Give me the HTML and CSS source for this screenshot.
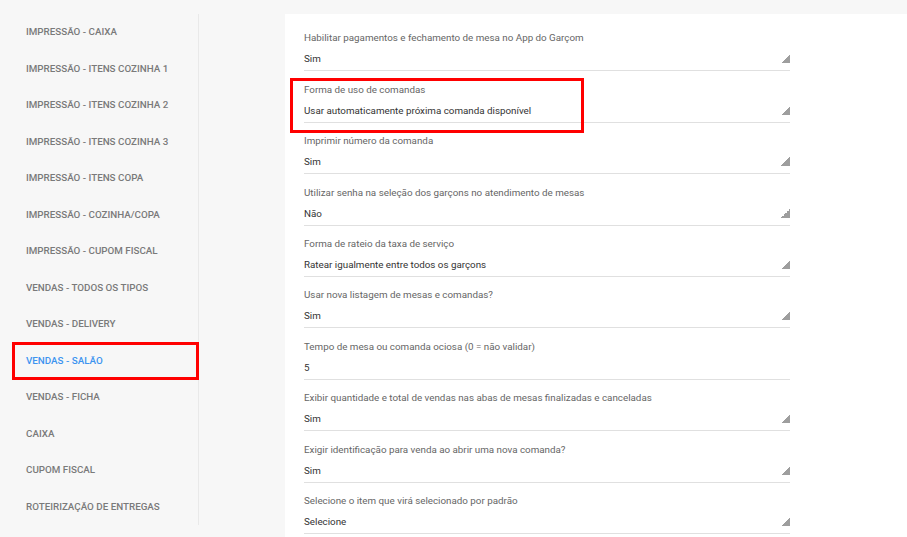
FILE: index.html
```html
<!DOCTYPE html>
<html lang="pt-BR">
  <head>
    <meta charset="UTF-8" />
    <meta name="viewport" content="width=device-width, initial-scale=1.0" />
    <title>Configurações</title>
    <link rel="stylesheet" href="styles.css">
  </head>
  <body>
    <div class="page">
      <ul class="sideMenu">
        <li class="sideItem">Impressão - Caixa</li>
        <li class="sideItem">Impressão - Itens Cozinha 1</li>
        <li class="sideItem">Impressão - Itens Cozinha 2</li>
        <li class="sideItem">Impressão - Itens Cozinha 3</li>
        <li class="sideItem">Impressão - Itens Copa</li>
        <li class="sideItem">Impressão - Cozinha/Copa</li>
        <li class="sideItem">Impressão - Cupom Fiscal</li>
        <li class="sideItem">Vendas - Todos os tipos</li>
        <li class="sideItem">Vendas - Delivery</li>
        <li class="sideItem active marked">Vendas - Salão</li>
        <li class="sideItem">Vendas - Ficha</li>
        <li class="sideItem">Caixa</li>
        <li class="sideItem">Cupom Fiscal</li>
        <li class="sideItem">Roteirização de entregas</li>
      </ul>

      <div class="content">
        <div class="fields">
          <div class="field">
            <div class="fieldLabel">Habilitar pagamentos e fechamento de mesa no App do Garçom</div>
            <div class="fieldValue"><span>Sim</span><i class="arrow"></i></div>
          </div>
          <div class="field marked">
            <div class="fieldLabel">Forma de uso de comandas</div>
            <div class="fieldValue"><span>Usar automaticamente próxima comanda disponível</span><i class="arrow"></i></div>
          </div>
          <div class="field">
            <div class="fieldLabel">Imprimir número da comanda</div>
            <div class="fieldValue"><span>Sim</span><i class="arrow"></i></div>
          </div>
          <div class="field">
            <div class="fieldLabel">Utilizar senha na seleção dos garçons no atendimento de mesas</div>
            <div class="fieldValue"><span>Não</span><i class="arrow"></i></div>
          </div>
          <div class="field">
            <div class="fieldLabel">Forma de rateio da taxa de serviço</div>
            <div class="fieldValue"><span>Ratear igualmente entre todos os garçons</span><i class="arrow"></i></div>
          </div>
          <div class="field">
            <div class="fieldLabel">Usar nova listagem de mesas e comandas?</div>
            <div class="fieldValue"><span>Sim</span><i class="arrow"></i></div>
          </div>
          <div class="field">
            <div class="fieldLabel">Tempo de mesa ou comanda ociosa (0 = não validar)</div>
            <div class="fieldValue"><span>5</span></div>
          </div>
          <div class="field">
            <div class="fieldLabel">Exibir quantidade e total de vendas nas abas de mesas finalizadas e canceladas</div>
            <div class="fieldValue"><span>Sim</span><i class="arrow"></i></div>
          </div>
          <div class="field">
            <div class="fieldLabel">Exigir identificação para venda ao abrir uma nova comanda?</div>
            <div class="fieldValue"><span>Sim</span><i class="arrow"></i></div>
          </div>
          <div class="field">
            <div class="fieldLabel">Selecione o item que virá selecionado por padrão</div>
            <div class="fieldValue"><span>Selecione</span><i class="arrow"></i></div>
          </div>
        </div>
      </div>
    </div>
  </body>
</html>
```

FILE: styles.css
```css
* {
  margin: 0;
  padding: 0;
  box-sizing: border-box;
}
html,
body {
  height: 100%;
  overflow: hidden;
}
body {
  background: #f7f7f7;
  font-family: Roboto, "Liberation Sans", Arial, sans-serif;
  font-size: 9.8px;
}
.page {
  display: flex;
  height: 100%;
  padding-top: 14px;
}

/* menu lateral */
.sideMenu {
  list-style: none;
  width: 199px;
  height: 511px;
  border-right: 1px solid #e9e9e9;
  flex-shrink: 0;
}
.sideItem {
  position: relative;
  height: 36.5px;
  line-height: 36.5px;
  padding-left: 26px;
  text-transform: uppercase;
  font-weight: 500;
  color: #7a7a7a;
  white-space: nowrap;
}
.sideItem.active {
  color: #3d94f0;
}
.sideItem.marked::after {
  content: "";
  position: absolute;
  left: 12px;
  right: -1px;
  top: -1px;
  bottom: -1px;
  border: 3px solid #f00;
}

/* conteúdo */
.content {
  flex: 1;
  margin-left: 86px;
  background: #fff;
  padding: 6px 0 0 19px;
}
.fields {
  width: 486px;
}
.field {
  position: relative;
  padding-top: 10.4px;
  border-bottom: 1px solid #e0e0e0;
}
.field.marked::after {
  content: "";
  position: absolute;
  left: -14px;
  top: 6.6px;
  width: 288px;
  height: 49px;
  border: 3px solid #f00;
}
.fieldLabel {
  height: 16px;
  line-height: 16px;
  color: #666;
  white-space: nowrap;
}
.fieldValue {
  display: flex;
  justify-content: space-between;
  height: 16px;
  line-height: 16px;
  margin-top: 5px;
  margin-bottom: 3px;
  color: #333;
}
.arrow {
  width: 9px;
  height: 9px;
  align-self: flex-end;
  margin-bottom: 4px;
  background: linear-gradient(to bottom right, transparent 50%, #9e9e9e 50%);
}
```
